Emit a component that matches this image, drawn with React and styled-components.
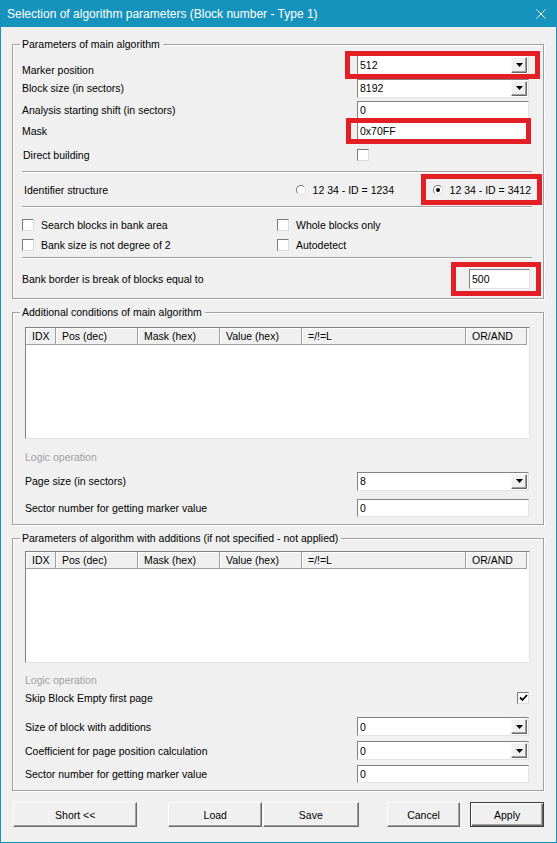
import React from "react";
import styled, { createGlobalStyle } from "styled-components";

const FONT = `"Liberation Sans", Arial, sans-serif`;
const FS = "10.5px";

const Global = createGlobalStyle`
  html, body { margin: 0; padding: 0; background: #f0f0f0; }
  body { font-family: ${FONT}; font-size: ${FS}; color: #000; }
  * { box-sizing: border-box; }
`;

const Window = styled.div`
  width: 557px;
  height: 843px;
  background: #f0f0f0;
  border: 1px solid #1693bd;
  border-top: none;
  display: flex;
  flex-direction: column;
  overflow: hidden;
`;

const TitleBar = styled.div`
  flex: none;
  height: 27px;
  background: #1693bd;
  color: #fff;
  font-size: 12px;
  display: flex;
  align-items: center;
  justify-content: space-between;
  padding-left: 6px;
  white-space: nowrap;
`;

const CloseBox = styled.div`
  width: 30px;
  height: 27px;
  display: flex;
  align-items: center;
  justify-content: center;
`;

const Content = styled.div`
  flex: 1;
  display: flex;
  flex-direction: column;
  gap: 6px;
  padding: 10px 12px 0 11px;
`;

const Group = styled.fieldset`
  margin: 0;
  padding: 0;
  min-width: 0;
  border: 1px solid #a0a0a0;
  box-shadow: inset 1px 1px #fff, 1px 1px #fff;
`;

const Legend = styled.legend`
  margin-left: 7px;
  padding: 0 3px 0 2px;
  line-height: 14px;
  font-size: ${FS};
  background: #f0f0f0;
`;

const Inner = styled.div`
  display: flex;
  flex-direction: column;
  padding: ${(p) => p.$pad};
`;

const FieldRow = styled.div`
  display: grid;
  grid-template-columns: 1fr ${(p) => p.$cw || 172}px;
  align-items: center;
  height: ${(p) => p.$h}px;
  margin-top: ${(p) => p.$mt || 0}px;
  margin-right: ${(p) => p.$mr || 0}px;
`;

const Label = styled.span`
  line-height: 14px;
  white-space: nowrap;
  color: ${(p) => (p.$disabled ? "#a0a0a0" : "#000")};
  margin-top: ${(p) => p.$drop || 0}px;
  padding-left: ${(p) => p.$indent || 0}px;
`;

const Separator = styled.div`
  height: 2px;
  border-top: 1px solid #a0a0a0;
  border-bottom: 1px solid #fff;
  margin-top: ${(p) => p.$mt || 0}px;
  margin-right: -3px;
`;

const Highlight = styled.div`
  position: relative;
  &::after {
    content: "";
    position: absolute;
    top: ${(p) => -p.$t}px;
    right: ${(p) => -p.$r}px;
    bottom: ${(p) => -p.$b}px;
    left: ${(p) => -p.$l}px;
    border: 5px solid #e31e24;
    pointer-events: none;
    z-index: 2;
  }
`;

const Box = styled.div`
  height: ${(p) => p.$h || 18}px;
  background: #fff;
  border: 1px solid;
  border-color: #828282 #e3e3e3 #e3e3e3 #828282;
  display: flex;
  align-items: center;
  padding: 0 1px 0 2px;
  line-height: 14px;
  white-space: nowrap;
`;

const Value = styled.span`
  flex: 1;
`;

const DropButton = styled.span`
  width: 16px;
  height: calc(100% - 2px);
  background: #f0f0f0;
  border: 1px solid;
  border-color: #f8f8f8 #696969 #696969 #f8f8f8;
  box-shadow: inset -1px -1px #a0a0a0;
  display: flex;
  align-items: center;
  justify-content: center;
`;

const CheckBox = styled.span`
  width: 12px;
  height: 12px;
  flex: none;
  background: #fff;
  border: 1px solid;
  border-color: #7a7a7a #dcdcdc #dcdcdc #7a7a7a;
  display: inline-flex;
  align-items: center;
  justify-content: center;
  justify-self: ${(p) => p.$align || "start"};
`;

const CheckOption = styled.div`
  display: flex;
  align-items: center;
  gap: 7px;
  line-height: 14px;
  white-space: nowrap;
`;

const CheckGrid = styled.div`
  display: grid;
  grid-template-columns: 255px 1fr;
  grid-auto-rows: 20px;
  align-items: center;
  padding-top: 7px;
`;

const IdentRow = styled.div`
  display: flex;
  align-items: center;
  height: 33px;
  margin-right: -2px;
`;

const Grow = styled.div`
  flex: 1;
`;

const RadioOption = styled.div`
  display: flex;
  align-items: center;
  gap: 7px;
  line-height: 14px;
  white-space: nowrap;
  width: ${(p) => (p.$w ? `${p.$w}px` : "auto")};
`;

const RadioDot = styled.span`
  width: 10px;
  height: 10px;
  flex: none;
  border-radius: 50%;
  background: #fff;
  border: 1px solid;
  border-color: #7a7a7a #dcdcdc #dcdcdc #7a7a7a;
  display: inline-flex;
  align-items: center;
  justify-content: center;
  &::after {
    content: "";
    width: 4px;
    height: 4px;
    border-radius: 50%;
    background: ${(p) => (p.$on ? "#000" : "transparent")};
  }
`;

const ListView = styled.div`
  height: 112px;
  background: #fff;
  border: 1px solid;
  border-color: #828282 #e3e3e3 #e3e3e3 #828282;
  margin-right: -1px;
`;

const HeaderRow = styled.div`
  display: flex;
  height: 17px;
`;

const HeaderCell = styled.div`
  width: ${(p) => p.$w}px;
  flex: none;
  background: #f0f0f0;
  border-right: 1px solid #a0a0a0;
  border-bottom: 1px solid #a0a0a0;
  box-shadow: inset 1px 1px #fff;
  padding-left: 6px;
  line-height: 16px;
  white-space: nowrap;
  overflow: hidden;
`;

const ButtonRow = styled.div`
  display: flex;
  margin-top: 5px;
  padding-left: 1px;
`;

const Button = styled.button`
  width: ${(p) => p.$w}px;
  height: 25px;
  margin: 0 0 0 ${(p) => p.$ml || 0}px;
  padding: 0;
  font-family: ${FONT};
  font-size: ${FS};
  color: #000;
  background: #f0f0f0;
  border: 1px solid;
  border-color: ${(p) => (p.$default ? "#3c3c3c" : "#fff #696969 #696969 #fff")};
  box-shadow: ${(p) =>
    p.$default
      ? "inset 1px 1px #fff, inset -1px -1px #696969, inset -2px -2px #a0a0a0"
      : "inset -1px -1px #a0a0a0"};
`;

const Arrow = () => (
  <svg width="7" height="4" viewBox="0 0 7 4">
    <polygon points="0,0 7,0 3.5,4" fill="#000" />
  </svg>
);

const Tick = () => (
  <svg width="9" height="8" viewBox="0 0 9 8">
    <polyline points="1,3.5 3.5,6 8,1" fill="none" stroke="#000" strokeWidth="1.8" />
  </svg>
);

const Combo = ({ value, h = 19 }) => (
  <Box $h={h}>
    <Value>{value}</Value>
    <DropButton>
      <Arrow />
    </DropButton>
  </Box>
);

const Edit = ({ value, h = 18 }) => (
  <Box $h={h}>
    <Value>{value}</Value>
  </Box>
);

const columns = [
  ["IDX", 30],
  ["Pos (dec)", 82],
  ["Mask (hex)", 82],
  ["Value (hex)", 82],
  ["=/!=L", 164],
  ["OR/AND", 61],
];

const ConditionTable = () => (
  <ListView>
    <HeaderRow>
      {columns.map(([t, w]) => (
        <HeaderCell key={t} $w={w}>
          {t}
        </HeaderCell>
      ))}
    </HeaderRow>
  </ListView>
);

export default function App() {
  return (
    <>
      <Global />
      <Window>
        <TitleBar>
          <span>Selection of algorithm parameters (Block number - Type 1)</span>
          <CloseBox>
            <svg width="10" height="10" viewBox="0 0 10 10">
              <path d="M0.5 0.5 L9.5 9.5 M9.5 0.5 L0.5 9.5" stroke="#fff" strokeWidth="1" />
            </svg>
          </CloseBox>
        </TitleBar>
        <Content>
          <Group>
            <Legend>Parameters of main algorithm</Legend>
            <Inner $pad="2px 14px 0 9px">
              <FieldRow $h={23}>
                <Label $drop={10}>Marker position</Label>
                <Highlight $t={4} $r={11} $b={4} $l={12}>
                  <Combo value="512" h={20} />
                </Highlight>
              </FieldRow>
              <FieldRow $h={24}>
                <Label>Block size (in sectors)</Label>
                <Combo value="8192" />
              </FieldRow>
              <FieldRow $h={20}>
                <Label>Analysis starting shift (in sectors)</Label>
                <Edit value="0" />
              </FieldRow>
              <FieldRow $h={22}>
                <Label>Mask</Label>
                <Highlight $t={4} $r={2} $b={4} $l={11}>
                  <Edit value="0x70FF" />
                </Highlight>
              </FieldRow>
              <FieldRow $h={25}>
                <Label $indent={1}>Direct building</Label>
                <CheckBox />
              </FieldRow>
              <Separator $mt={4} />
              <IdentRow>
                <Label $indent={2}>Identifier structure</Label>
                <Grow />
                <RadioOption $w={137}>
                  <RadioDot />
                  <span>12 34 - ID = 1234</span>
                </RadioOption>
                <Highlight $t={9} $r={11} $b={8} $l={12}>
                  <RadioOption>
                    <RadioDot $on />
                    <span>12 34 - ID = 3412</span>
                  </RadioOption>
                </Highlight>
              </IdentRow>
              <Separator />
              <CheckGrid>
                <CheckOption>
                  <CheckBox />
                  <span>Search blocks in bank area</span>
                </CheckOption>
                <CheckOption>
                  <CheckBox />
                  <span>Whole blocks only</span>
                </CheckOption>
                <CheckOption>
                  <CheckBox />
                  <span>Bank size is not degree of 2</span>
                </CheckOption>
                <CheckOption>
                  <CheckBox />
                  <span>Autodetect</span>
                </CheckOption>
              </CheckGrid>
              <Separator $mt={2} />
              <FieldRow $h={39} $cw={61} $mr={-1}>
                <Label>Bank border is break of blocks equal to</Label>
                <Highlight $t={7} $r={11} $b={7} $l={18}>
                  <Edit value="500" h={20} />
                </Highlight>
              </FieldRow>
            </Inner>
          </Group>

          <Group>
            <Legend>Additional conditions of main algorithm</Legend>
            <Inner $pad="8px 14px 7px 12px">
              <ConditionTable />
              <FieldRow $h={18} $mt={9}>
                <Label $disabled>Logic operation</Label>
              </FieldRow>
              <FieldRow $h={20} $mt={5}>
                <Label>Page size (in sectors)</Label>
                <Combo value="8" />
              </FieldRow>
              <FieldRow $h={18} $mt={8}>
                <Label>Sector number for getting marker value</Label>
                <Edit value="0" />
              </FieldRow>
            </Inner>
          </Group>

          <Group>
            <Legend>Parameters of algorithm with additions (if not specified - not applied)</Legend>
            <Inner $pad="6px 14px 7px 12px">
              <ConditionTable />
              <FieldRow $h={18} $mt={8}>
                <Label $disabled>Logic operation</Label>
              </FieldRow>
              <FieldRow $h={18}>
                <Label>Skip Block Empty first page</Label>
                <CheckBox $align="end">
                  <Tick />
                </CheckBox>
              </FieldRow>
              <FieldRow $h={19} $mt={10}>
                <Label>Size of block with additions</Label>
                <Combo value="0" />
              </FieldRow>
              <FieldRow $h={19} $mt={5}>
                <Label>Coefficient for page position calculation</Label>
                <Combo value="0" />
              </FieldRow>
              <FieldRow $h={18} $mt={5}>
                <Label>Sector number for getting marker value</Label>
                <Edit value="0" />
              </FieldRow>
            </Inner>
          </Group>

          <ButtonRow>
            <Button $w={125}>Short &lt;&lt;</Button>
            <Button $w={94} $ml={31}>Load</Button>
            <Button $w={96} $ml={1}>Save</Button>
            <Button $w={74} $ml={28}>Cancel</Button>
            <Button $w={74} $ml={10} $default>Apply</Button>
          </ButtonRow>
        </Content>
      </Window>
    </>
  );
}
